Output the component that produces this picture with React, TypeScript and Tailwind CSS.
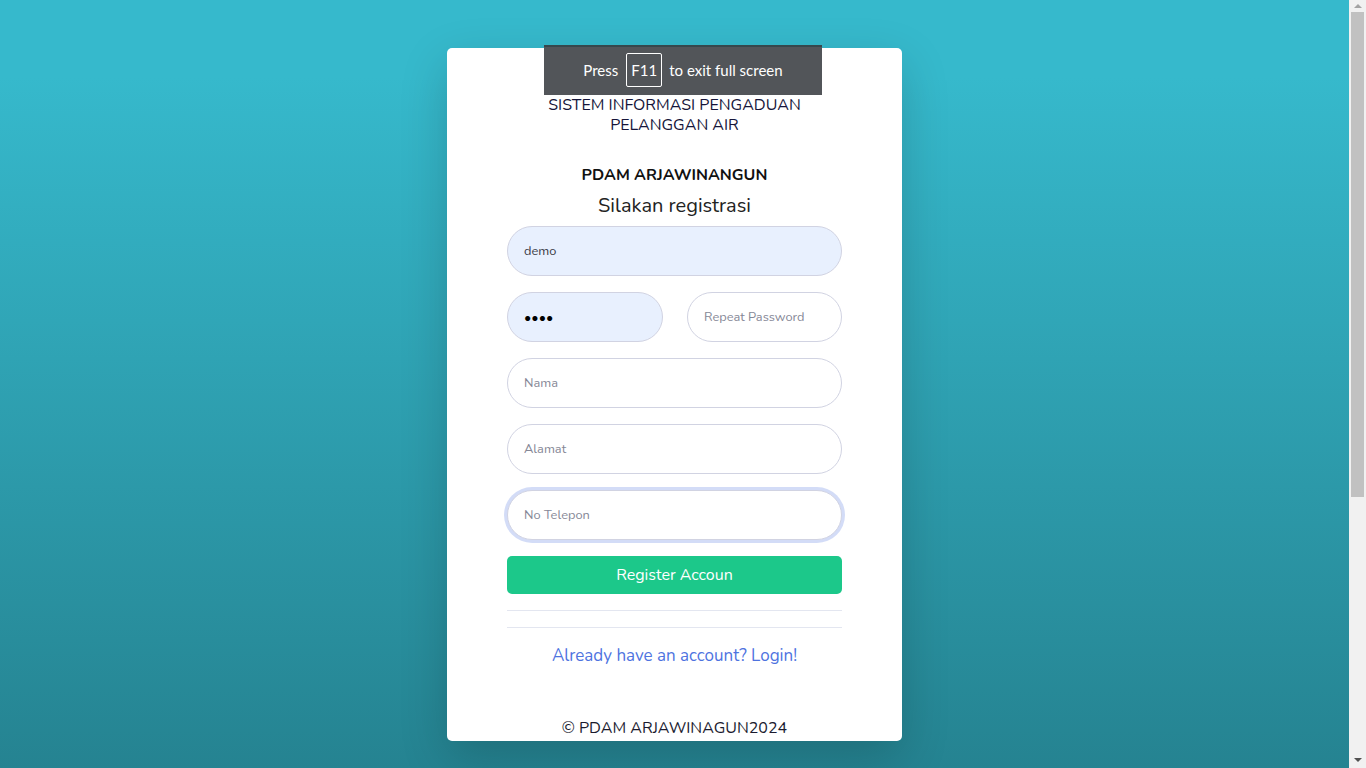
import React from "react";

const font = { fontFamily: '"Nunito", "Noto Sans", "Open Sans", sans-serif' };

function Field({ value, placeholder, type = "text", autofill = false, focused = false, className = "" }: { value?: string; placeholder?: string; type?: string; autofill?: boolean; focused?: boolean; className?: string }) {
  return (
    <input
      type={type}
      defaultValue={value}
      placeholder={placeholder}
      readOnly
      className={
        "h-[50px] rounded-full border px-4 text-[12.8px] text-[#3a3b45] placeholder:text-[#858796] outline-none " +
        (autofill ? "bg-[#e8f0fe] border-[#d1d3e2] " : "bg-white border-[#d1d3e2] ") +
        (focused ? "border-[#bac8f3] shadow-[0_0_0_3px_rgba(78,115,223,0.25)] " : "") +
        className
      }
      style={font}
    />
  );
}

export default function App() {
  return (
    <div className="flex h-screen w-full overflow-hidden" style={font}>
      <div className="relative h-full flex-1 bg-[linear-gradient(180deg,#36b9cc_10%,#258391_100%)]">
        <div className="flex justify-center pt-[48px]">
          <div className="relative w-[455px] rounded-[5px] bg-white px-[60px] pt-[47px] pb-[3px] shadow-[0_1rem_3rem_rgba(0,0,0,0.175)]">
            <div className="text-center text-[16px] leading-[20px] text-[#15153a]">
              SISTEM INFORMASI PENGADUAN
              <br />
              PELANGGAN AIR
            </div>
            <div className="mt-[30px] text-center text-[16px] font-bold leading-[20px] text-[#111]">PDAM ARJAWINANGUN</div>
            <div className="mt-[9px] text-center text-[20px] leading-[24px] text-[#222]">Silakan registrasi</div>

            <div className="mt-[8px] flex flex-col gap-4">
              <Field value="demo" autofill className="w-full" />
              <div className="flex gap-6">
                <Field value="demo" type="password" autofill className="w-[156px] text-[14px] text-black" />
                <Field placeholder="Repeat Password" className="w-[155px]" />
              </div>
              <Field placeholder="Nama" className="w-full" />
              <Field placeholder="Alamat" className="w-full" />
              <Field placeholder="No Telepon" focused className="w-full" />
              <button className="h-[38px] w-full rounded-[5px] bg-[#1cc88a] text-[16px] text-white" style={font}>
                Register Accoun
              </button>
            </div>

            <hr className="mt-4 border-t border-[#e3e6f0]" />
            <hr className="mt-4 border-t border-[#e3e6f0]" />

            <div className="mt-4 text-center text-[17px] leading-[24px] text-[#4e73df]">Already have an account? Login!</div>

            <div className="mt-[50px] text-center text-[16px] leading-[20px] text-[#1b1b2f]">© PDAM ARJAWINAGUN2024</div>
          </div>
        </div>

        <div
          className="absolute left-[544px] top-[45px] flex h-[50px] w-[278px] items-center justify-center border-t-[2px] border-[#36474c] bg-[#525559] pb-[2px] text-[15px] text-white"
          style={{ fontFamily: 'Lato, "Open Sans", sans-serif' }}
        >
          <span>Press</span>
          <span className="ml-[8px] flex h-[34px] w-[36px] items-center justify-center rounded-[2px] border border-white">F11</span>
          <span className="ml-[7px]">to exit full screen</span>
        </div>
      </div>

      <div className="flex h-full w-[17px] flex-col items-center bg-[#f1f1f1]">
        <div className="flex h-[12px] w-full items-center justify-center">
          <svg width="8" height="4" viewBox="0 0 8 4"><path d="M0 4 L4 0 L8 4 Z" fill="#a3a3a3" /></svg>
        </div>
        <div className="h-[485px] w-[13px] bg-[#c1c1c1]" />
        <div className="flex-1" />
        <div className="flex h-[17px] w-full items-center justify-center">
          <svg width="8" height="4" viewBox="0 0 8 4"><path d="M0 0 L8 0 L4 4 Z" fill="#505050" /></svg>
        </div>
      </div>
    </div>
  );
}
